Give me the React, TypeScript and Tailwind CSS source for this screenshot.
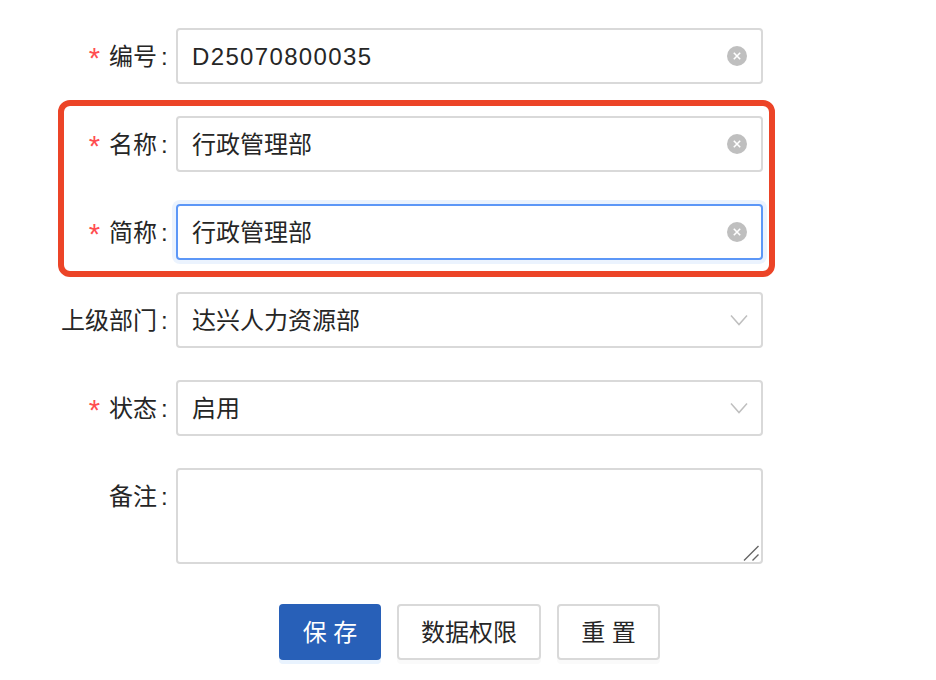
const FONT = "font-['Liberation_Sans','Noto_Sans_CJK_SC',sans-serif]";

function ClearIcon() {
  return (
    <svg width="20" height="20" viewBox="0 0 20 20" className="shrink-0">
      <circle cx="10" cy="10" r="10" fill="#bfbfbf" />
      <path d="M6.8 6.8l6.4 6.4M13.2 6.8l-6.4 6.4" stroke="#fff" strokeWidth="1.6" fill="none" />
    </svg>
  );
}

function ChevronIcon() {
  return (
    <svg width="18" height="12" viewBox="0 0 18 12" className="-mr-[1px] shrink-0">
      <path d="M1 1.5l8 9 8-9" stroke="#bfbfbf" strokeWidth="1.5" fill="none" />
    </svg>
  );
}

function Label({ text, required }: { text: string; required?: boolean }) {
  return (
    <div className="flex h-14 w-[176px] shrink-0 items-center justify-end pr-[8px] pt-[2px] text-[24px] text-[#262626]">
      {required && <span className="mr-[9px] mt-[3px] text-[29px] leading-none text-[#ff4d4f]">*</span>}
      <span>{text}</span>
      <span className="ml-[4px] mr-[1px] w-[6px]">:</span>
    </div>
  );
}

function Field({
  label,
  value,
  required,
  focused,
  kind,
}: {
  label: string;
  value: string;
  required?: boolean;
  focused?: boolean;
  kind: "input" | "select";
}) {
  return (
    <div className="mb-8 flex">
      <Label text={label} required={required} />
      <div
        className={`flex h-14 w-[587px] items-center justify-between rounded-[4px] border-2 pl-[14px] pr-[14px] text-[24px] text-[#262626] ${
          focused ? "border-[#5c97f7] shadow-[0_0_0_4px_#ebf3fe]" : "border-[#d9d9d9]"
        }`}
      >
        <span className={`pt-[2px] ${/^[A-Z]/.test(value) ? "tracking-[1.35px]" : ""}`}>{value}</span>
        {kind === "input" ? <ClearIcon /> : <ChevronIcon />}
      </div>
    </div>
  );
}

export default function App() {
  return (
    <div className={`relative min-h-[680px] w-[936px] overflow-hidden bg-white pt-[28px] ${FONT}`}>
      <Field label="编号" value="D25070800035" required kind="input" />
      <Field label="名称" value="行政管理部" required kind="input" />
      <Field label="简称" value="行政管理部" required focused kind="input" />
      <Field label="上级部门" value="达兴人力资源部" kind="select" />
      <Field label="状态" value="启用" required kind="select" />

      <div className="mb-10 flex">
        <Label text="备注" />
        <div className="relative h-24 w-[587px] rounded-[4px] border-2 border-[#d9d9d9]">
          <svg width="18" height="18" viewBox="0 0 18 18" className="absolute bottom-0 right-0">
            <path d="M1 16.5L15.5 2M9.5 16.5l6-6" stroke="#666" strokeWidth="1.4" fill="none" />
          </svg>
        </div>
      </div>

      <div className="flex gap-4 pl-[279px] text-[24px]">
        <button className="h-14 w-[102px] rounded-[4px] bg-[#2860b8] pt-[2px] text-white shadow-[0_4px_0_#e9f3fe]">保 存</button>
        <button className="h-14 w-[144px] rounded-[4px] border-2 border-[#d9d9d9] pt-[2px] text-[#262626] shadow-[0_4px_0_#fafafa]">数据权限</button>
        <button className="h-14 w-[103px] rounded-[4px] border-2 border-[#d9d9d9] pt-[2px] text-[#262626] shadow-[0_4px_0_#fafafa]">重 置</button>
      </div>

      {/* red annotation drawn over the form */}
      <div className="pointer-events-none absolute left-[58px] top-[100px] h-[177px] w-[717px] rounded-[12px] border-[6px] border-[#ec4427]" />
    </div>
  );
}
